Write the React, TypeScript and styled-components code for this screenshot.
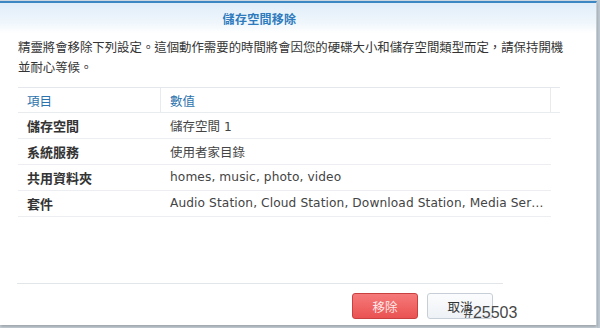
import React from "react";
import styled, { createGlobalStyle } from "styled-components";

const GlobalStyle = createGlobalStyle`
  html, body { margin: 0; padding: 0; }
  body {
    background: #c3ccd4;
    font-family: "DejaVu Sans", "Noto Sans CJK TC", sans-serif;
  }
`;

const Screen = styled.div`
  position: relative;
  width: 600px;
  height: 328px;
  box-sizing: border-box;
  padding-top: 1px;
  background: linear-gradient(to right, #cfd8e0 0, #cfd8e0 597px, #bfc9d2 597px);
  overflow: hidden;
`;

const Dialog = styled.div`
  width: 597px;
  height: 324px;
  box-sizing: border-box;
  background: #ffffff;
  border-top: 2px solid #3a87c3;
  border-right: 1px solid #c4ccd4;
  display: flex;
  flex-direction: column;
  box-shadow: 0 2px 3px rgba(0, 0, 0, 0.25);
`;

const Header = styled.div`
  height: 30px;
  flex: none;
  display: flex;
  align-items: center;
  justify-content: center;
  padding-right: 77px;
  background: linear-gradient(to bottom, #dfedf9 0%, #f1f7fc 70%, #ffffff 100%);
`;

const Title = styled.div`
  font-family: "Noto Sans CJK TC", sans-serif;
  font-size: 12px;
  font-weight: 700;
  color: #2f7bbd;
  letter-spacing: 0.3px;
`;

const Body = styled.div`
  flex: 1;
  display: flex;
  flex-direction: column;
  padding: 4px 0 0 18px;
`;

const Intro = styled.div`
  width: 556px;
  font-family: "Noto Sans CJK TC", sans-serif;
  font-size: 12.4px;
  line-height: 20px;
  color: #333333;
`;

const Table = styled.div`
  margin-top: 10px;
  width: 542px;
  display: flex;
  flex-direction: column;
`;

const HeadRow = styled.div`
  display: grid;
  grid-template-columns: 143px 390px 1fr;
  height: 24px;
  border-top: 1px solid #e4e8ec;
  border-bottom: 1px solid #e9ecef;
`;

const HeadCell = styled.div<{ $divider?: boolean }>`
  display: flex;
  align-items: center;
  padding-left: 9px;
  font-family: "Noto Sans CJK TC", sans-serif;
  font-size: 12.5px;
  color: #2c72ad;
  border-right: ${(p) => (p.$divider ? "1px solid #e8ebee" : "none")};
`;

const Row = styled.div`
  display: grid;
  grid-template-columns: 143px 390px;
  width: 533px;
  height: 25px;
  border-bottom: 1px solid #eceef1;
`;

const Label = styled.div`
  display: flex;
  align-items: center;
  padding-left: 9px;
  font-family: "Noto Sans CJK TC", sans-serif;
  font-size: 13px;
  font-weight: 700;
  color: #333333;
`;

const Value = styled.div`
  padding: 0 4px 0 9px;
  line-height: 25px;
  font-family: "DejaVu Sans", "Noto Sans CJK TC", sans-serif;
  font-size: 12.2px;
  letter-spacing: 0.1px;
  color: #444444;
  white-space: nowrap;
  overflow: hidden;
  text-overflow: ellipsis;
`;

const CjkText = styled.span`
  font-family: "Noto Sans CJK TC", sans-serif;
  font-size: 12.5px;
  letter-spacing: 0;
`;

const Spacer = styled.div`
  flex: 1;
`;

const Separator = styled.div`
  height: 1px;
  margin: 0 93px 0 -1px;
  background: #e3e6e9;
`;

const Footer = styled.div`
  display: flex;
  justify-content: flex-end;
  gap: 9px;
  padding: 9px 103px 6px 0;
  margin-left: -18px;
`;

const Button = styled.button<{ $danger?: boolean }>`
  width: 66px;
  height: 26px;
  box-sizing: border-box;
  border-radius: 3px;
  font-family: "Noto Sans CJK TC", sans-serif;
  font-size: 12.5px;
  padding: 0;
  cursor: pointer;
  border: 1px solid ${(p) => (p.$danger ? "#c8403f" : "#c6cfd8")};
  color: ${(p) => (p.$danger ? "#fde8e8" : "#333333")};
  background: ${(p) =>
    p.$danger
      ? "linear-gradient(to bottom, #f67a7a 0%, #ea5252 100%)"
      : "linear-gradient(to bottom, #fbfcfd 0%, #eef2f6 100%)"};
`;

const Watermark = styled.div`
  position: absolute;
  left: 464px;
  top: 304px;
  font-family: "Liberation Sans", sans-serif;
  font-size: 16px;
  line-height: 18px;
  color: #474747;
`;

const rows: { label: string; value: React.ReactNode }[] = [
  { label: "儲存空間", value: <><CjkText>儲存空間</CjkText> 1</> },
  { label: "系統服務", value: <CjkText>使用者家目錄</CjkText> },
  { label: "共用資料夾", value: "homes, music, photo, video" },
  {
    label: "套件",
    value: "Audio Station, Cloud Station, Download Station, Media Server",
  },
];

export default function App() {
  return (
    <Screen>
      <GlobalStyle />
      <Dialog>
        <Header>
          <Title>儲存空間移除</Title>
        </Header>
        <Body>
          <Intro>
            精靈將會移除下列設定。這個動作需要的時間將會因您的硬碟大小和儲存空間類型而定，請保持開機並耐心等候。
          </Intro>
          <Table>
            <HeadRow>
              <HeadCell $divider>項目</HeadCell>
              <HeadCell $divider>數值</HeadCell>
              <HeadCell />
            </HeadRow>
            {rows.map((r) => (
              <Row key={r.label}>
                <Label>{r.label}</Label>
                <Value>{r.value}</Value>
              </Row>
            ))}
          </Table>
          <Spacer />
          <Separator />
          <Footer>
            <Button $danger>移除</Button>
            <Button>取消</Button>
          </Footer>
        </Body>
      </Dialog>
      <Watermark>#25503</Watermark>
    </Screen>
  );
}
